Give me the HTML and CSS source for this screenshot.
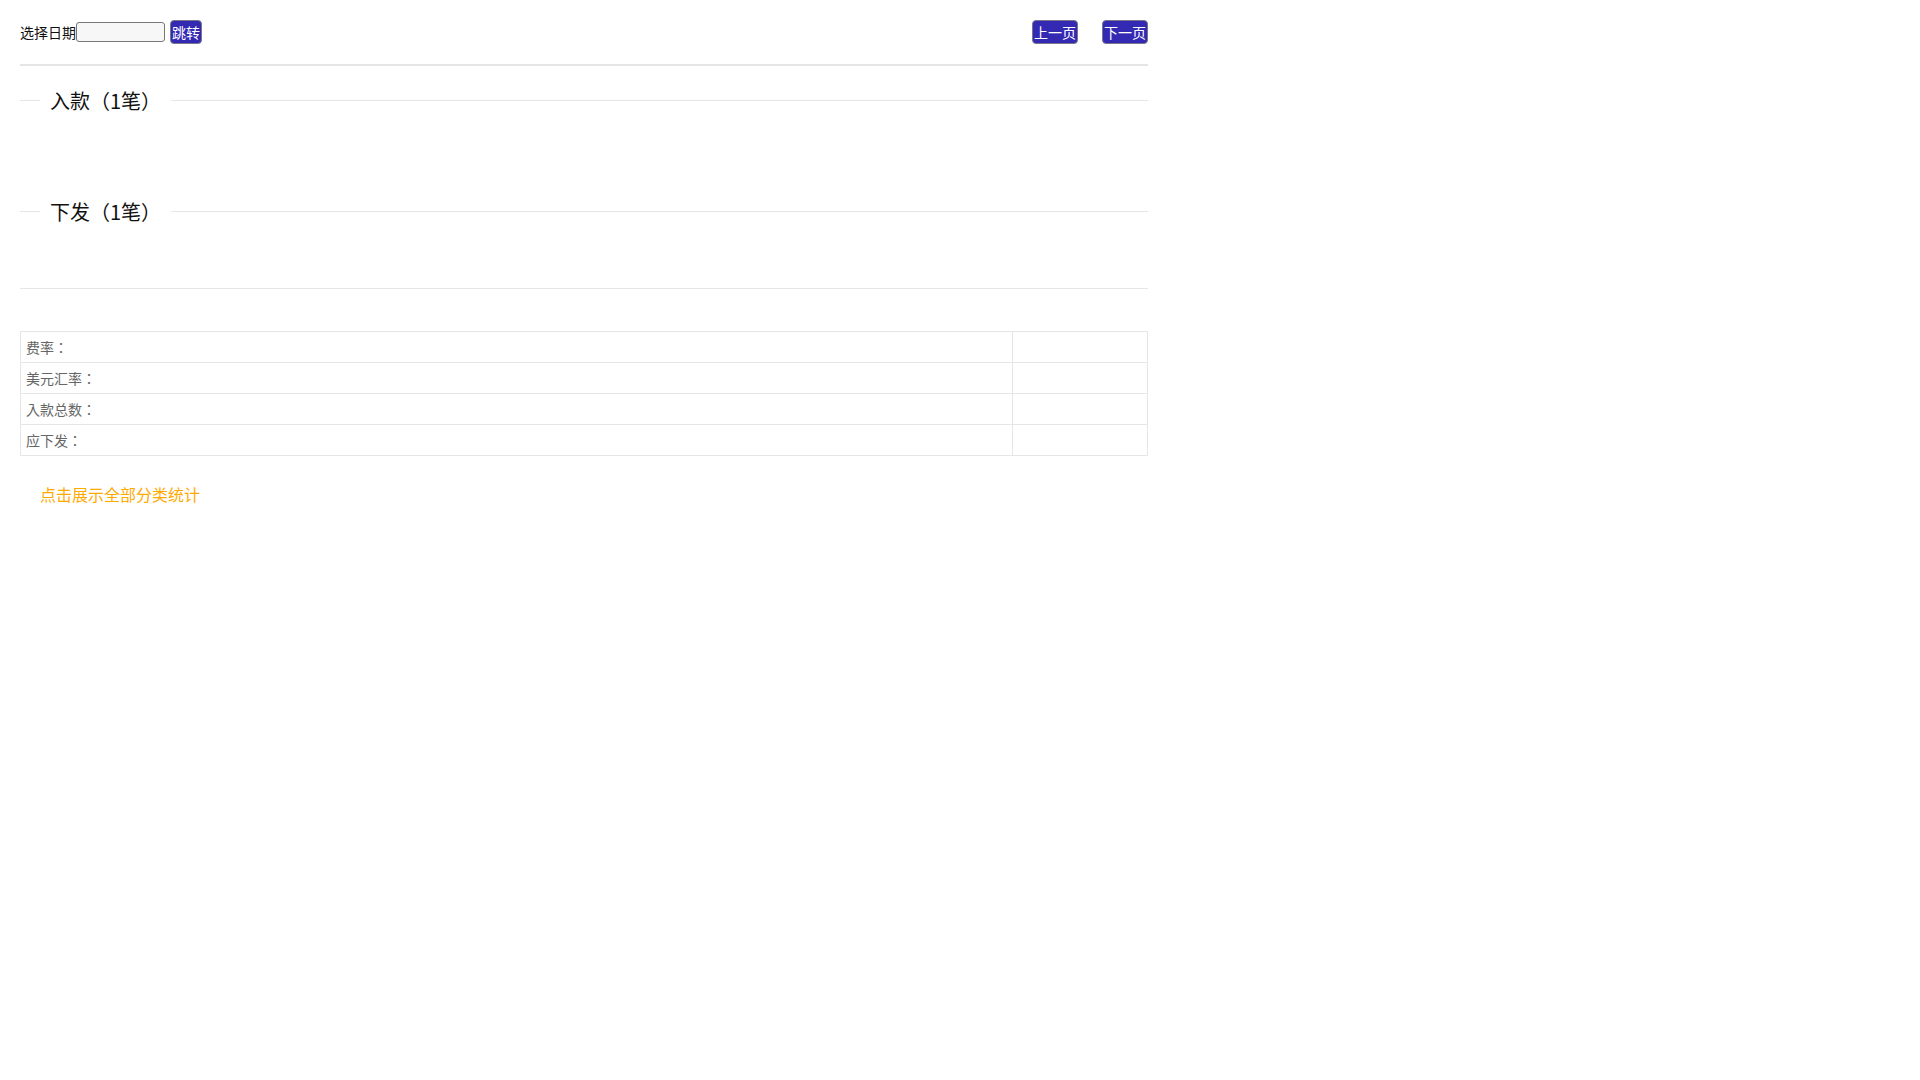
FILE: index.html
```html
<html>
  <head>
    <meta charset="UTF-8">
    <title>日报表</title>
    <link rel="stylesheet" href="styles.css">
  </head>
  <body>
    <div class="wrap">
      <div class="top-bar">
        <span class="date-label">选择日期</span><input type="text" class="date-box">
        <button type="button" class="blue-btn go-btn">跳转</button>
        <div class="pager">
          <button type="button" class="blue-btn">上一页</button>
          <button type="button" class="blue-btn">下一页</button>
        </div>
      </div>

      <hr class="top-line">

      <div class="field-title"><span class="legend">入款（1笔）</span></div>
      <div class="field-body"></div>

      <div class="field-title"><span class="legend">下发（1笔）</span></div>
      <div class="field-body short"></div>

      <hr class="thin-line">

      <table class="sum-table">
        <tr><td>费率：</td><td class="val"></td></tr>
        <tr><td>美元汇率：</td><td class="val"></td></tr>
        <tr><td>入款总数：</td><td class="val"></td></tr>
        <tr><td>应下发：</td><td class="val"></td></tr>
      </table>

      <p class="more"><a href="#" class="more-link">点击展示全部分类统计</a></p>
    </div>
  </body>
</html>
```

FILE: styles.css
```css
body {
  margin: 0;
  background: #fff;
  font-family: "Noto Sans CJK SC", "Liberation Sans", sans-serif;
  color: #222;
}

.wrap {
  width: 1128px;
  padding: 20px;
}

.top-bar {
  display: flex;
  align-items: center;
  height: 24px;
}

.date-label {
  font-size: 14px;
  line-height: 20px;
  color: #111;
}

.date-box {
  box-sizing: border-box;
  width: 89px;
  height: 20px;
  margin: 0;
  padding: 0 2px;
  border: 1px solid #767676;
  border-radius: 3px;
  background: #f7f7f7;
}

.blue-btn {
  box-sizing: border-box;
  height: 24px;
  margin: 0;
  padding: 0 1px;
  border: 1px solid #77778a;
  border-radius: 4px;
  background: #3329b3;
  color: #fff;
  font-family: "Noto Sans CJK SC", sans-serif;
  font-size: 14px;
  line-height: 20px;
}

.blue-btn:hover {
  cursor: pointer;
}

.go-btn {
  margin-left: 5px;
}

.pager {
  display: flex;
  gap: 24px;
  margin-left: auto;
}

.top-line {
  height: 2px;
  margin: 20px 0 19px;
  border: 0;
  background: #e5e5e5;
}

.field-title {
  display: flex;
  align-items: center;
  height: 30px;
}

.field-title::before {
  content: "";
  width: 20px;
  height: 1px;
  background: #e6e6e6;
}

.field-title::after {
  content: "";
  flex: 1;
  height: 1px;
  background: #e6e6e6;
}

.legend {
  padding: 2px 10px 0;
  font-size: 20px;
  line-height: 28px;
  color: #111;
}

.field-body {
  height: 81px;
}

.field-body.short {
  height: 62px;
}

.thin-line {
  height: 1px;
  margin: 0 0 42px;
  border: 0;
  background: #e6e6e6;
}

.sum-table {
  width: 100%;
  border-collapse: collapse;
}

.sum-table td {
  height: 20px;
  padding: 5px 5px;
  border: 1px solid #e6e6e6;
  font-family: "Noto Sans CJK TC", "Noto Sans CJK SC", sans-serif;
  font-size: 14px;
  line-height: 20px;
  color: #666;
}

.sum-table .val {
  width: 124px;
}

.more {
  margin: 26px 0 0 20px;
  font-size: 16px;
  line-height: 24px;
}

.more-link {
  color: #ffaa00;
  text-decoration: none;
}
```
